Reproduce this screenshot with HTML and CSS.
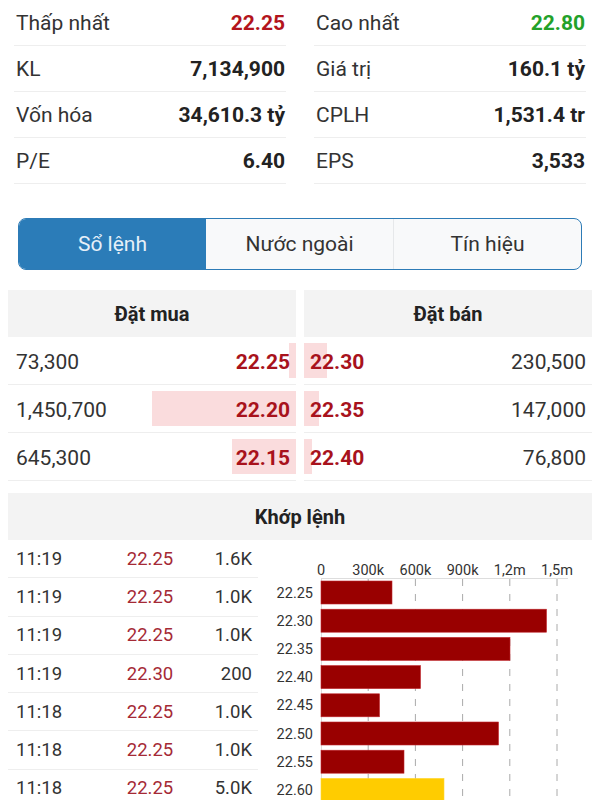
FILE: index.html
```html
<!DOCTYPE html>
<html lang="vi">
<head>
  <meta charset="UTF-8">
  <meta name="viewport" content="width=device-width, initial-scale=1.0">
  <title>Sổ lệnh</title>
  <link rel="stylesheet" href="styles.css">
</head>
<body>

  <!-- Thông tin tổng quan -->
  <div class="stats">
    <div class="stat-col">
      <div class="stat-row"><span class="stat-label">Thấp nhất</span><span class="stat-value down">22.25</span></div>
      <div class="stat-row"><span class="stat-label">KL</span><span class="stat-value">7,134,900</span></div>
      <div class="stat-row"><span class="stat-label">Vốn hóa</span><span class="stat-value">34,610.3 tỷ</span></div>
      <div class="stat-row"><span class="stat-label">P/E</span><span class="stat-value">6.40</span></div>
    </div>
    <div class="stat-col">
      <div class="stat-row"><span class="stat-label">Cao nhất</span><span class="stat-value up">22.80</span></div>
      <div class="stat-row"><span class="stat-label">Giá trị</span><span class="stat-value">160.1 tỷ</span></div>
      <div class="stat-row"><span class="stat-label">CPLH</span><span class="stat-value">1,531.4 tr</span></div>
      <div class="stat-row"><span class="stat-label">EPS</span><span class="stat-value">3,533</span></div>
    </div>
  </div>

  <div class="tabs">
    <div class="tab active">Sổ lệnh</div>
    <div class="tab">Nước ngoài</div>
    <div class="tab">Tín hiệu</div>
  </div>

  <!-- Sổ lệnh -->
  <div class="book">
    <div class="book-side buy">
      <div class="section-head">Đặt mua</div>
      <div class="book-row">
        <span class="book-bar" style="width: 2.5%"></span>
        <span class="book-vol">73,300</span><span class="book-price">22.25</span>
      </div>
      <div class="book-row">
        <span class="book-bar" style="width: 50%"></span>
        <span class="book-vol">1,450,700</span><span class="book-price">22.20</span>
      </div>
      <div class="book-row">
        <span class="book-bar" style="width: 22.2%"></span>
        <span class="book-vol">645,300</span><span class="book-price">22.15</span>
      </div>
    </div>
    <div class="book-side sell">
      <div class="section-head">Đặt bán</div>
      <div class="book-row">
        <span class="book-bar" style="width: 7.9%"></span>
        <span class="book-price">22.30</span><span class="book-vol">230,500</span>
      </div>
      <div class="book-row">
        <span class="book-bar" style="width: 5.1%"></span>
        <span class="book-price">22.35</span><span class="book-vol">147,000</span>
      </div>
      <div class="book-row">
        <span class="book-bar" style="width: 2.7%"></span>
        <span class="book-price">22.40</span><span class="book-vol">76,800</span>
      </div>
    </div>
  </div>

  <!-- Khớp lệnh -->
  <div class="matched">
    <div class="section-head">Khớp lệnh</div>
    <div class="matched-body">
      <div class="trades">
        <div class="trade"><span class="t-time">11:19</span><span class="t-price">22.25</span><span class="t-vol">1.6K</span></div>
        <div class="trade"><span class="t-time">11:19</span><span class="t-price">22.25</span><span class="t-vol">1.0K</span></div>
        <div class="trade"><span class="t-time">11:19</span><span class="t-price">22.25</span><span class="t-vol">1.0K</span></div>
        <div class="trade"><span class="t-time">11:19</span><span class="t-price">22.30</span><span class="t-vol">200</span></div>
        <div class="trade"><span class="t-time">11:18</span><span class="t-price">22.25</span><span class="t-vol">1.0K</span></div>
        <div class="trade"><span class="t-time">11:18</span><span class="t-price">22.25</span><span class="t-vol">1.0K</span></div>
        <div class="trade"><span class="t-time">11:18</span><span class="t-price">22.25</span><span class="t-vol">5.0K</span></div>
      </div>

      <svg class="chart" width="334" height="270" viewBox="0 0 334 270">
        <g class="axis-labels">
          <text x="63" y="35">0</text>
          <text x="110.2" y="35">300k</text>
          <text x="157.4" y="35">600k</text>
          <text x="204.6" y="35">900k</text>
          <text x="251.8" y="35">1,2m</text>
          <text x="299" y="35">1,5m</text>
        </g>
        <line class="axis" x1="63" y1="38.5" x2="310" y2="38.5"/>
        <g class="grid">
          <line x1="110.2" y1="39" x2="110.2" y2="270"/>
          <line x1="157.4" y1="39" x2="157.4" y2="270"/>
          <line x1="204.6" y1="39" x2="204.6" y2="270"/>
          <line x1="251.8" y1="39" x2="251.8" y2="270"/>
          <line x1="299" y1="39" x2="299" y2="270"/>
        </g>
        <line class="axis" x1="63.5" y1="39" x2="63.5" y2="270"/>
        <g class="bars">
          <rect x="63" y="41" width="71" height="23"/>
          <rect x="63" y="69.2" width="225.5" height="23"/>
          <rect x="63" y="97.4" width="189" height="23"/>
          <rect x="63" y="125.6" width="99.5" height="23"/>
          <rect x="63" y="153.8" width="58.5" height="23"/>
          <rect x="63" y="182" width="177.5" height="23"/>
          <rect x="63" y="210.2" width="83" height="23"/>
          <rect class="ref" x="63" y="238.4" width="123" height="23"/>
        </g>
        <g class="price-labels">
          <text x="55" y="57.5">22.25</text>
          <text x="55" y="85.7">22.30</text>
          <text x="55" y="113.9">22.35</text>
          <text x="55" y="142.1">22.40</text>
          <text x="55" y="170.3">22.45</text>
          <text x="55" y="198.5">22.50</text>
          <text x="55" y="226.7">22.55</text>
          <text x="55" y="254.9">22.60</text>
        </g>
      </svg>
    </div>
  </div>

</body>
</html>
```

FILE: styles.css
```css
body {
  margin: 0;
  background-color: #fff;
  font-family: Roboto, "Noto Sans", sans-serif;
  color: #333;
  overflow: hidden;
}

/* Stats */
.stats {
  display: grid;
  grid-template-columns: 1fr 1fr;
  column-gap: 28px;
  padding: 0 14px;
}

.stat-row {
  display: flex;
  justify-content: space-between;
  align-items: center;
  height: 45px;
  padding: 0 1px 0 2px;
  border-bottom: 1px solid #eee;
  font-size: 21px;
}

.stat-value {
  font-weight: bold;
  color: #222;
}

.stat-value.down {
  color: #b3141c;
}

.stat-value.up {
  color: #23a12a;
}

/* Tabs */
.tabs {
  display: flex;
  margin: 34px 18px 0 18px;
  height: 50px;
  border: 1px solid #2d7bb6;
  border-radius: 8px;
  overflow: hidden;
  background-color: #f8f9fa;
}

.tab {
  flex: 1;
  display: flex;
  align-items: center;
  justify-content: center;
  font-size: 21px;
  color: #333;
}

.tab + .tab {
  border-left: 1px solid #e6e8ea;
}

.tab.active {
  background-color: #2b7cb8;
  color: #e6f0f8;
}

.tab.active + .tab {
  border-left: none;
}

/* Order book */
.section-head {
  height: 47px;
  display: flex;
  align-items: center;
  justify-content: center;
  background-color: #f3f3f3;
  font-size: 20px;
  font-weight: bold;
  color: #222;
}

.book {
  display: flex;
  gap: 8px;
  margin: 20px 8px 0 8px;
}

.book-side {
  flex: 1;
}

.book-row {
  position: relative;
  display: flex;
  justify-content: space-between;
  align-items: center;
  height: 45px;
  padding-top: 2px;
  border-bottom: 1px solid #eee;
  font-size: 21px;
}

.book-bar {
  position: absolute;
  top: 6px;
  bottom: 6px;
  background-color: #fadcdd;
}

.buy .book-bar {
  right: 0;
}

.sell .book-bar {
  left: 0;
}

.book-vol,
.book-price {
  position: relative;
}

.buy .book-vol {
  padding-left: 8px;
}

.buy .book-price {
  padding-right: 6px;
}

.sell .book-price {
  padding-left: 6px;
}

.sell .book-vol {
  padding-right: 6px;
}

.book-price {
  font-weight: bold;
  color: #a8121c;
}

/* Matched orders */
.matched {
  margin: 12px 8px 0 8px;
}

.matched-body {
  display: flex;
}

.trades {
  width: 250px;
}

.trade {
  display: flex;
  align-items: center;
  height: 37.3px;
  border-bottom: 1px solid #eee;
  font-size: 18.5px;
}

.t-time {
  width: 92px;
  padding-left: 8px;
  box-sizing: border-box;
}

.t-price {
  width: 100px;
  text-align: center;
  color: #a52a36;
}

.t-vol {
  flex: 1;
  text-align: right;
  padding-right: 6px;
}

.chart {
  display: block;
}

.chart text {
  font-family: Roboto, sans-serif;
  font-size: 14.5px;
  fill: #333;
}

.axis-labels text {
  text-anchor: middle;
}

.price-labels text {
  text-anchor: end;
}

.axis {
  stroke: #ddd;
  stroke-width: 1;
}

.grid line {
  stroke: #aaa;
  stroke-width: 1;
  stroke-dasharray: 7 8;
}

.bars rect {
  fill: #990000;
  stroke: #c0262c;
  stroke-width: 0.6;
}

.bars rect.ref {
  fill: #ffcc00;
  stroke: #ffd633;
}
```
